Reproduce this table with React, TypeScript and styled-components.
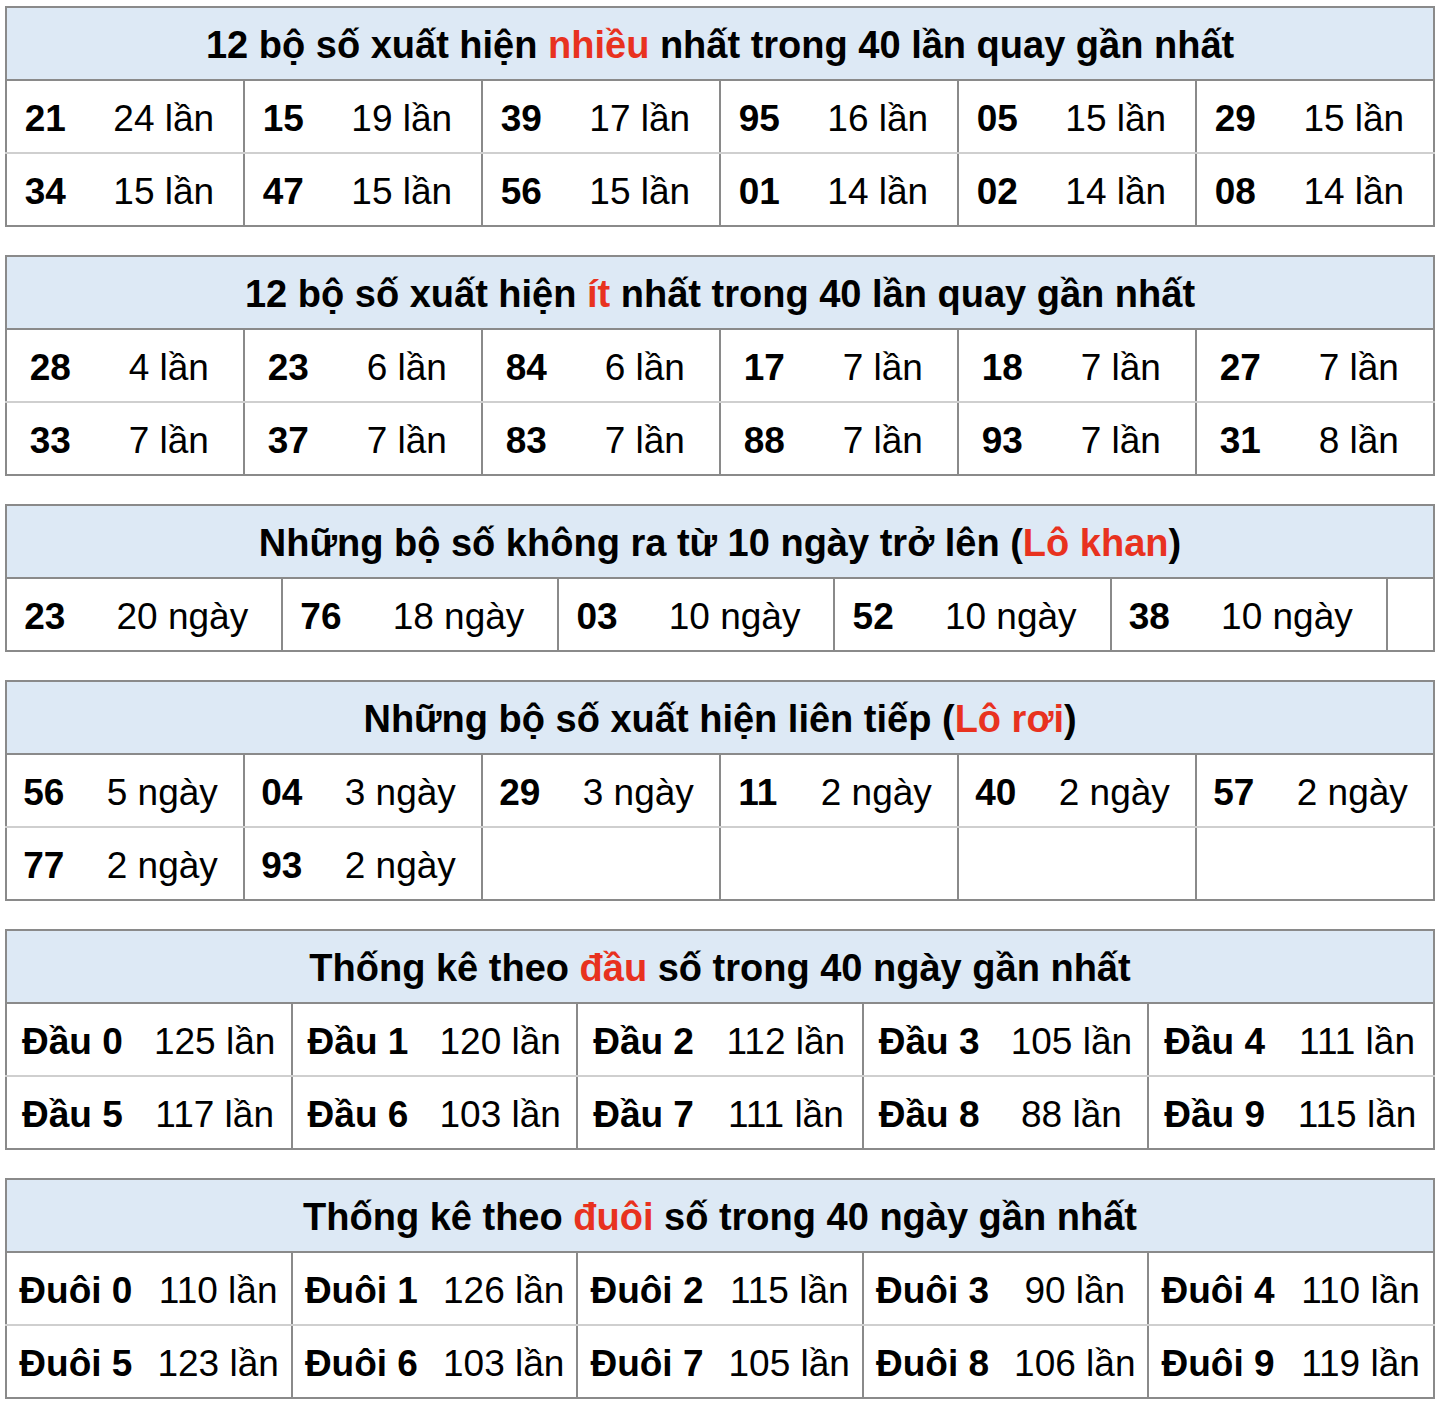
import React from "react";
import styled, { createGlobalStyle } from "styled-components";

const GlobalStyle = createGlobalStyle`
  body {
    margin: 0;
    background: #fff;
    color: #000;
    font-family: "Liberation Sans", Arial, Helvetica, sans-serif;
  }
`;

const Page = styled.div`
  display: flex;
  flex-direction: column;
  gap: 28px;
  padding: 6px 5px 0 5px;
`;

const Hot = styled.span`
  color: #e8321f;
`;

const StatTable = styled.table`
  width: 1430px;
  table-layout: fixed;
  border-collapse: collapse;
  border: 2px solid #8a8a8a;
  font-size: 37px;
  line-height: 1;
  tbody tr:last-child td {
    border-bottom: 2px solid #8a8a8a;
  }
`;

const Head = styled.th`
  height: 68px;
  padding: 3px 0 0 0;
  background: #dde9f5;
  border: 2px solid #8a8a8a;
  font-size: 38px;
  font-weight: bold;
  text-align: center;
  vertical-align: middle;
`;

const Cell = styled.td`
  height: 68px;
  padding: 3px 0 0 0;
  text-align: center;
  vertical-align: middle;
  white-space: nowrap;
  border-bottom: 2px solid #cfcfcf;
`;

const NumCell = styled(Cell)`
  font-weight: bold;
  border-left: 2px solid #8a8a8a;
  border-right: 1px solid #fff;
`;

const ValCell = styled(Cell)`
  font-weight: normal;
  border-right: 2px solid #8a8a8a;
`;

type Pair = [string, string] | null;

interface Block {
  title: React.ReactNode;
  numW: number;
  valW: number;
  extra?: [number, number];
  rows: Pair[][];
}

const lan = (n: number) => `${n} lần`;
const ngay = (n: number) => `${n} ngày`;

const blocks: Block[] = [
  {
    title: (
      <>
        12 bộ số xuất hiện <Hot>nhiều</Hot> nhất trong 40 lần quay gần nhất
      </>
    ),
    numW: 78,
    valW: 160,
    rows: [
      [["21", lan(24)], ["15", lan(19)], ["39", lan(17)], ["95", lan(16)], ["05", lan(15)], ["29", lan(15)]],
      [["34", lan(15)], ["47", lan(15)], ["56", lan(15)], ["01", lan(14)], ["02", lan(14)], ["08", lan(14)]],
    ],
  },
  {
    title: (
      <>
        12 bộ số xuất hiện <Hot>ít</Hot> nhất trong 40 lần quay gần nhất
      </>
    ),
    numW: 88,
    valW: 150,
    rows: [
      [["28", lan(4)], ["23", lan(6)], ["84", lan(6)], ["17", lan(7)], ["18", lan(7)], ["27", lan(7)]],
      [["33", lan(7)], ["37", lan(7)], ["83", lan(7)], ["88", lan(7)], ["93", lan(7)], ["31", lan(8)]],
    ],
  },
  {
    title: (
      <>
        Những bộ số không ra từ 10 ngày trở lên (<Hot>Lô khan</Hot>)
      </>
    ),
    numW: 77,
    valW: 199,
    extra: [23, 24],
    rows: [[["23", ngay(20)], ["76", ngay(18)], ["03", ngay(10)], ["52", ngay(10)], ["38", ngay(10)], null]],
  },
  {
    title: (
      <>
        Những bộ số xuất hiện liên tiếp (<Hot>Lô rơi</Hot>)
      </>
    ),
    numW: 75,
    valW: 163,
    rows: [
      [["56", ngay(5)], ["04", ngay(3)], ["29", ngay(3)], ["11", ngay(2)], ["40", ngay(2)], ["57", ngay(2)]],
      [["77", ngay(2)], ["93", ngay(2)], null, null, null, null],
    ],
  },
  {
    title: (
      <>
        Thống kê theo <Hot>đầu</Hot> số trong 40 ngày gần nhất
      </>
    ),
    numW: 132,
    valW: 153,
    rows: [
      [["Đầu 0", lan(125)], ["Đầu 1", lan(120)], ["Đầu 2", lan(112)], ["Đầu 3", lan(105)], ["Đầu 4", lan(111)]],
      [["Đầu 5", lan(117)], ["Đầu 6", lan(103)], ["Đầu 7", lan(111)], ["Đầu 8", lan(88)], ["Đầu 9", lan(115)]],
    ],
  },
  {
    title: (
      <>
        Thống kê theo <Hot>đuôi</Hot> số trong 40 ngày gần nhất
      </>
    ),
    numW: 139,
    valW: 146,
    rows: [
      [["Đuôi 0", lan(110)], ["Đuôi 1", lan(126)], ["Đuôi 2", lan(115)], ["Đuôi 3", lan(90)], ["Đuôi 4", lan(110)]],
      [["Đuôi 5", lan(123)], ["Đuôi 6", lan(103)], ["Đuôi 7", lan(105)], ["Đuôi 8", lan(106)], ["Đuôi 9", lan(119)]],
    ],
  },
];

export default function App() {
  return (
    <>
      <GlobalStyle />
      <Page>
        {blocks.map((b, i) => {
          const pairs = b.rows[0].length;
          const widths: number[] = [];
          for (let p = 0; p < pairs; p++) {
            if (b.extra && p === pairs - 1) widths.push(...b.extra);
            else widths.push(b.numW, b.valW);
          }
          return (
            <StatTable key={i}>
              <colgroup>
                {widths.map((w, k) => (
                  <col key={k} style={{ width: w }} />
                ))}
              </colgroup>
              <thead>
                <tr>
                  <Head colSpan={widths.length}>{b.title}</Head>
                </tr>
              </thead>
              <tbody>
                {b.rows.map((row, r) => (
                  <tr key={r}>
                    {row.map((pair, c) => (
                      <React.Fragment key={c}>
                        <NumCell>{pair ? pair[0] : ""}</NumCell>
                        <ValCell>{pair ? pair[1] : ""}</ValCell>
                      </React.Fragment>
                    ))}
                  </tr>
                ))}
              </tbody>
            </StatTable>
          );
        })}
      </Page>
    </>
  );
}
